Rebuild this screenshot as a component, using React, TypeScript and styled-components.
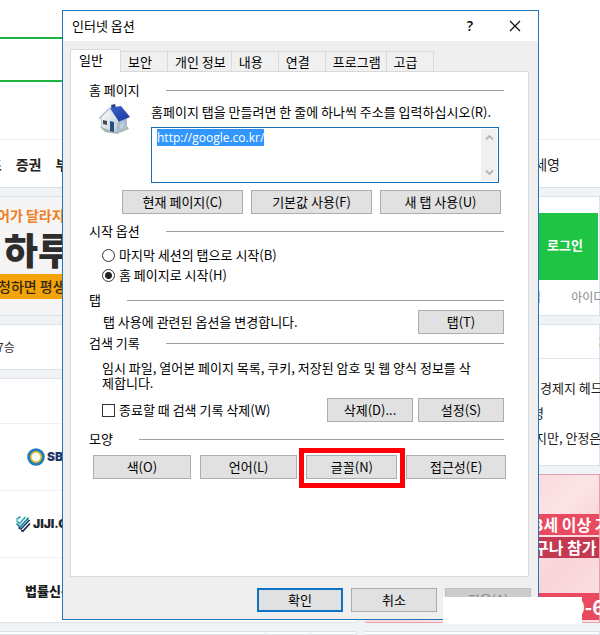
import React, { useEffect, useRef, useState } from "react";
import styled, { createGlobalStyle, css } from "styled-components";

const GlobalStyle = createGlobalStyle`
  * { box-sizing: border-box; }
  body {
    margin: 0;
    background: #fff;
    font-family: "Noto Sans CJK KR", "Noto Sans", sans-serif;
    font-size: 13px;
    line-height: 16px;
    color: #000;
  }
  button, input, textarea { font: inherit; color: inherit; margin: 0; }
  a { color: inherit; text-decoration: none; }
`;

/* ---------- portal page behind the dialog ---------- */

const Page = styled.div`
  position: relative;
  display: flex;
  flex-direction: column;
  min-height: 100vh;
  overflow: hidden;
  background: #f0f3f6;
  white-space: nowrap;
`;

const SearchHeader = styled.header`
  padding: 37px 0 57px;
  background: #fff;
  border-bottom: 1px solid #f0f0f0;
`;

const SearchBox = styled.div`
  width: 60%;
  height: 45px;
  border: 2px solid #20b345;
  border-left: 0;
`;

const PortalNav = styled.nav`
  display: flex;
  align-items: center;
  gap: 14px;
  height: 48px;
  padding-right: 40px;
  overflow: hidden;
  background: #fff;
  border-bottom: 1px solid #d9dee4;
  font-size: 14px;
`;

const NavLink = styled.a<{ $first?: boolean }>`
  font-weight: 700;
  color: #222;
  margin-left: ${(p) => (p.$first ? "-37px" : "0")};
`;

const Trend = styled.a`
  margin-left: auto;
  color: #222;
`;

const Columns = styled.div`
  display: flex;
  flex: 1;
  gap: 8px;
  padding-top: 8px;
`;

const Column = styled.div<{ $main?: boolean }>`
  display: flex;
  flex-direction: column;
  gap: 8px;
  overflow: hidden;
  flex: ${(p) => (p.$main ? "357 1 0" : "235 1 0")};
`;

const Card = styled.section<{ $grow?: boolean }>`
  background: #fff;
  border: 1px solid #dde2e8;
  border-left-width: 0;
  flex: ${(p) => (p.$grow ? "1" : "none")};
`;

const Banner = styled(Card)`
  height: 120px;
  background: #f5f5f5;
  overflow: hidden;
`;

const BannerLead = styled.p`
  margin: 8px 0 0 -3px;
  line-height: 20px;
  font-size: 14px;
  font-weight: 700;
  color: #ef7d22;
`;

const BannerTitle = styled.p`
  margin: 0 0 0 4px;
  line-height: 49px;
  font-size: 37px;
  font-weight: 900;
  color: #2d2d2d;
`;

const BannerStrip = styled.p`
  margin: 0;
  text-indent: -2px;
  line-height: 25px;
  font-size: 14px;
  font-weight: 500;
  color: #38290c;
  background: #f3a40a;
`;

const ScoreCard = styled(Card)`
  height: 46px;
  line-height: 44px;
  font-size: 12px;
  color: #333;
  text-indent: -3px;
`;

const PressList = styled(Card)`
  height: 245px;
  padding-top: 44px;
`;

const PressRow = styled.a<{ $indent: number }>`
  display: flex;
  align-items: center;
  gap: 2px;
  height: 67px;
  padding-left: ${(p) => p.$indent}px;
  border-top: 1px solid #eef0f2;
`;

const PressName = styled.span<{ $color: string; $latin?: boolean }>`
  color: ${(p) => p.$color};
  font-size: ${(p) => (p.$latin ? "12px" : "13px")};
  font-weight: 900;
  font-family: ${(p) => (p.$latin ? 'Inter, "Noto Sans", sans-serif' : "inherit")};
`;

const FooterTabs = styled(Card)`
  display: grid;
  grid-template-columns: 266fr 45fr 45fr;
`;

const FooterCell = styled.div`
  border-right: 1px solid #e3e7ec;
  &:last-child { border-right: 0; }
`;

const LoginCard = styled(Card)`
  height: 120px;
  padding: 16px 1px 0 0;
`;

const LoginButton = styled.button`
  display: block;
  width: 100%;
  height: 67px;
  padding: 0 15px 3px 0;
  text-align: right;
  border: 0;
  background: #20c445;
  color: #fff;
  font-size: 13px;
  font-weight: 700;
`;

const LoginLinks = styled.div`
  display: flex;
  gap: 30px;
  padding-left: 132px;
  line-height: 34px;
  font-size: 12px;
  color: #888;
`;

const NewsCard = styled(Card)`
  height: 142px;
`;

const NewsHeader = styled.div`
  height: 34px;
  padding-left: 233px;
  line-height: 34px;
  color: #aaa;
  border-bottom: 1px solid #e4e8ec;
`;

const NewsLine = styled.a<{ $indent: number }>`
  display: block;
  padding-left: ${(p) => p.$indent}px;
  line-height: 25px;
  color: #222;
  &:first-of-type { margin-top: 16px; }
`;

const AdCard = styled(Card)`
  height: 149px;
  padding-top: 39px;
  border-color: #e5a2ac;
  background: linear-gradient(135deg, #fce8ea 0 25%, #fadade 45%, #fbe4e6 60%, #f9d3d8 75%, #fbe4e6);
  color: #fff;
  font-size: 16px;
  font-weight: 700;
`;

const AdStrip = styled.p<{ $dark?: boolean }>`
  margin: 0 0 2px;
  padding-left: 169px;
  line-height: 21px;
  background: ${(p) => (p.$dark ? "#c43850" : "#e94a60")};
`;

const AdPhone = styled.p`
  margin: 35px 0 0;
  padding-left: 208px;
  line-height: 27px;
  font-size: 20px;
  background: #e94a60;
`;

/* ---------- options dialog ---------- */

const Dialog = styled.div`
  position: absolute;
  top: 10px;
  left: 62px;
  right: 61px;
  display: flex;
  flex-direction: column;
  border: 1px solid #2377b8;
  background: #efefef;
`;

const TitleBar = styled.header`
  display: flex;
  align-items: center;
  height: 30px;
  padding: 0 12px 0 9px;
  background: #fff;
`;

const Title = styled.h1`
  flex: 1;
  margin: 0;
  font-size: 13px;
  font-weight: 400;
`;

const TitleButton = styled.button`
  display: grid;
  place-items: center;
  width: 22px;
  height: 22px;
  margin-left: 23px;
  padding: 0;
  border: 0;
  background: transparent;
  font-family: "Open Sans", sans-serif;
  font-size: 14px;
  font-weight: 600;
`;

const DialogBody = styled.div`
  padding: 8px 9px 7px 7px;
`;

const TabList = styled.div`
  display: flex;
  align-items: flex-end;
  height: 22px;
`;

const Tab = styled.button<{ $active: boolean }>`
  min-width: 47px;
  height: 20px;
  padding: 0 5px 0 7px;
  text-align: left;
  border: 1px solid #d9d9d9;
  border-width: 1px 1px 0 0;
  background: #f0f0f0;
  ${(p) =>
    p.$active &&
    css`
      z-index: 1;
      min-width: 51px;
      height: 23px;
      margin-bottom: -1px;
      padding: 0 5px 3px 8px;
      border-left-width: 1px;
      background: #fff;
    `}
`;

const TabPanel = styled.div`
  padding: 10px 22px 88px 18px;
  border: 1px solid #d9d9d9;
  background: #fff;
`;

const Group = styled.section`
  margin-bottom: 9px;
`;

const GroupTitle = styled.h2`
  display: flex;
  align-items: center;
  gap: 26px;
  margin: 0;
  padding-right: 2px;
  font-size: 13px;
  font-weight: 400;
  &::after {
    content: "";
    flex: 1;
    height: 1px;
    background: #a0a0a0;
  }
`;

const HomeRow = styled.div`
  display: flex;
  gap: 20px;
  padding: 6px 7px 7px 9px;
`;

const HomeField = styled.div`
  flex: 1;
  min-width: 0;
`;

const AddressLabel = styled.label`
  display: block;
  margin-bottom: 7px;
`;

const AddressBox = styled.div`
  display: flex;
  height: 56px;
  padding: 1px;
  border: 1px solid #1670b8;
  background: #fff;
`;

const AddressInput = styled.textarea`
  flex: 1;
  min-width: 0;
  padding: 1px 4px;
  border: 0;
  outline: 0;
  resize: none;
  overflow: hidden;
  background: transparent;
  font-family: "Open Sans", sans-serif;
  font-size: 12px;
  &::selection { background: #3297fd; color: #fff; }
`;

const ScrollTrack = styled.div`
  display: flex;
  flex-direction: column;
  justify-content: space-between;
  width: 16px;
  background: #f0f0f0;
`;

const ScrollButton = styled.button`
  display: grid;
  place-items: center;
  width: 16px;
  height: 17px;
  padding: 0;
  border: 0;
  background: transparent;
`;

const PushButton = styled.button<{ $primary?: boolean; $fixed?: boolean }>`
  width: ${(p) => (p.$fixed ? "86px" : "100%")};
  height: 24px;
  padding: 0;
  border: ${(p) => (p.$primary ? "2px solid #0f74c4" : "1px solid #adadad")};
  background: #e1e1e1;
  &:disabled {
    background: #ccc;
    border-color: #bfbfbf;
    color: #838383;
  }
`;

const HomeButtons = styled.div`
  display: grid;
  grid-template-columns: repeat(3, 1fr);
  gap: 8px;
  padding: 0 5px 0 33px;
`;

const Choices = styled.div`
  padding: 6px 0 0 13px;
  margin-bottom: -2px;
`;

const Choice = styled.label`
  display: flex;
  align-items: center;
  gap: 4px;
  height: 20px;
`;

const Radio = styled.input`
  appearance: none;
  width: 13px;
  height: 13px;
  border: 1px solid #333;
  border-radius: 50%;
  background: #fff;
  &:checked { background: radial-gradient(circle, #222 0 3px, #fff 4px); }
`;

const Check = styled.input`
  appearance: none;
  width: 13px;
  height: 13px;
  border: 1px solid #333;
  background: #fff;
  &:checked { background: #333; }
`;

const ActionRow = styled.div<{ $tight?: boolean }>`
  display: flex;
  align-items: center;
  gap: 5px;
  padding: ${(p) => (p.$tight ? "2px 2px 0 14px" : "8px 2px 0 13px")};
  margin-bottom: ${(p) => (p.$tight ? "-8px" : "0")};
`;

const Grow = styled.div`
  flex: 1;
`;

const Note = styled.p`
  margin: 0;
  padding: 9px 26px 0 13px;
  line-height: 15px;
  white-space: normal;
  word-break: break-all;
`;

const LookButtons = styled.div`
  display: grid;
  grid-template-columns: 98fr 98fr 91fr 100fr;
  gap: 9px;
  padding: 8px 0 0 4px;
`;

const Highlight = styled.div`
  position: relative;
  &::after {
    content: "";
    position: absolute;
    inset: -7px -8px -9px -7px;
    border: 5px solid #fb0007;
    pointer-events: none;
  }
`;

const DialogButtons = styled.footer`
  display: flex;
  justify-content: flex-end;
  gap: 8px;
  padding-top: 11px;
  margin-right: -2px;
`;

const BlankPatch = styled.div`
  position: absolute;
  left: 443px;
  right: 18px;
  top: 597px;
  height: 27px;
  background: #fff;
`;

/* ---------- drawings ---------- */

const HouseIcon = () => (
  <svg width="33" height="32" viewBox="0 0 33 32" aria-hidden="true">
    <defs>
      <linearGradient id="roof" x1="0" y1="0" x2="1" y2="1">
        <stop offset="0" stopColor="#3c62c8" />
        <stop offset="1" stopColor="#1736a0" />
      </linearGradient>
      <linearGradient id="wall" x1="0" y1="0" x2="1" y2="1">
        <stop offset="0" stopColor="#ffffff" />
        <stop offset="1" stopColor="#bccbd5" />
      </linearGradient>
    </defs>
    <path d="M2 23 L7 28 L19 30 L31 25 L29 22 Z" fill="#a7b8ab" />
    <path d="M13 1 L17 0 L18 4 L14 6 Z" fill="#2b3f78" />
    <path d="M3 13 L11 5 L20 17 L19 29 L4 24 Z" fill="url(#wall)" stroke="#9aa8b2" strokeWidth="0.7" />
    <path d="M20 17 L29 13 L29 24 L19 29 Z" fill="#aabfcb" />
    <path d="M11 4 L23 2 L32 13 L20 18 Z" fill="url(#roof)" />
    <path d="M1 14 L11 4 L20 18" fill="none" stroke="#dbe4ed" strokeWidth="1.6" />
    <path d="M1 15 L11 5" fill="none" stroke="#7c8ea5" strokeWidth="0.6" />
    <path d="M5 16 L9 17 L9 21 L5 20 Z" fill="#3c4a55" />
    <path d="M12 17 L16 18 L16 28 L12 27 Z" fill="#235180" />
    <path d="M22 20 L26 18 L26 23 L22 25 Z" fill="#bfd0d9" />
  </svg>
);

const CloseIcon = () => (
  <svg width="12" height="12" viewBox="0 0 12 12" aria-hidden="true">
    <path d="M1 1 L11 11 M11 1 L1 11" stroke="#111" strokeWidth="1.2" fill="none" />
  </svg>
);

const Chevron = ({ up }: { up?: boolean }) => (
  <svg width="9" height="7" viewBox="0 0 9 7" aria-hidden="true">
    <path d={up ? "M1 5.5 L4.5 2 L8 5.5" : "M1 1.5 L4.5 5 L8 1.5"} stroke="#b3b3b3" strokeWidth="1.8" fill="none" />
  </svg>
);

const RingLogo = () => (
  <svg width="18" height="18" viewBox="0 0 18 18" aria-hidden="true">
    <circle cx="9" cy="9" r="7" fill="#fff" stroke="#1f7fb8" strokeWidth="3.6" />
    <circle cx="9" cy="9" r="5.2" fill="none" stroke="#edb52b" strokeWidth="1.6" />
  </svg>
);

const JijiLogo = () => (
  <svg width="15" height="16" viewBox="0 0 15 16" aria-hidden="true" fill="none" strokeWidth="1.7">
    <path d="M0.5 4.5 L3.5 7.5 L9.5 1" stroke="#35aab8" />
    <path d="M0.5 7.5 L4 11 L12.5 1.8" stroke="#2381a0" />
    <path d="M2.5 11.5 L5 13 L13.5 4" stroke="#1d4370" />
    <path d="M5 14.5 L7 15 L14 7.5" stroke="#18284c" />
    <path d="M0.5 3.5 L4.5 0.5" stroke="#35aab8" />
  </svg>
);

const TABS = ["일반", "보안", "개인 정보", "내용", "연결", "프로그램", "고급"];

function OptionsDialog() {
  const [tab, setTab] = useState(0);
  const [start, setStart] = useState("home");
  const address = useRef<HTMLTextAreaElement>(null);

  useEffect(() => {
    address.current?.focus();
    address.current?.select();
  }, []);

  return (
    <Dialog role="dialog" aria-labelledby="dialog-title">
      <TitleBar>
        <Title id="dialog-title">인터넷 옵션</Title>
        <TitleButton aria-label="도움말">?</TitleButton>
        <TitleButton aria-label="닫기"><CloseIcon /></TitleButton>
      </TitleBar>
      <DialogBody>
        <TabList role="tablist">
          {TABS.map((name, i) => (
            <Tab key={name} role="tab" aria-selected={tab === i} $active={tab === i} onClick={() => setTab(i)}>
              {name}
            </Tab>
          ))}
        </TabList>
        <TabPanel role="tabpanel">
          <Group>
            <GroupTitle>홈 페이지</GroupTitle>
            <HomeRow>
              <HouseIcon />
              <HomeField>
                <AddressLabel htmlFor="address">
                  홈페이지 탭을 만들려면 한 줄에 하나씩 주소를 입력하십시오(R).
                </AddressLabel>
                <AddressBox>
                  <AddressInput id="address" ref={address} spellCheck={false} defaultValue="http://google.co.kr/" />
                  <ScrollTrack>
                    <ScrollButton aria-label="위로"><Chevron up /></ScrollButton>
                    <ScrollButton aria-label="아래로"><Chevron /></ScrollButton>
                  </ScrollTrack>
                </AddressBox>
              </HomeField>
            </HomeRow>
            <HomeButtons>
              <PushButton>현재 페이지(C)</PushButton>
              <PushButton>기본값 사용(F)</PushButton>
              <PushButton>새 탭 사용(U)</PushButton>
            </HomeButtons>
          </Group>
          <Group>
            <GroupTitle>시작 옵션</GroupTitle>
            <Choices>
              <Choice>
                <Radio type="radio" name="start" checked={start === "last"} onChange={() => setStart("last")} />
                마지막 세션의 탭으로 시작(B)
              </Choice>
              <Choice>
                <Radio type="radio" name="start" checked={start === "home"} onChange={() => setStart("home")} />
                홈 페이지로 시작(H)
              </Choice>
            </Choices>
          </Group>
          <Group>
            <GroupTitle>탭</GroupTitle>
            <ActionRow $tight>
              <Grow>탭 사용에 관련된 옵션을 변경합니다.</Grow>
              <PushButton $fixed>탭(T)</PushButton>
            </ActionRow>
          </Group>
          <Group>
            <GroupTitle>검색 기록</GroupTitle>
            <Note>임시 파일, 열어본 페이지 목록, 쿠키, 저장된 암호 및 웹 양식 정보를 삭제합니다.</Note>
            <ActionRow>
              <Grow>
                <Choice>
                  <Check type="checkbox" />
                  종료할 때 검색 기록 삭제(W)
                </Choice>
              </Grow>
              <PushButton $fixed>삭제(D)...</PushButton>
              <PushButton $fixed>설정(S)</PushButton>
            </ActionRow>
          </Group>
          <Group>
            <GroupTitle>모양</GroupTitle>
            <LookButtons>
              <PushButton>색(O)</PushButton>
              <PushButton>언어(L)</PushButton>
              <Highlight><PushButton>글꼴(N)</PushButton></Highlight>
              <PushButton>접근성(E)</PushButton>
            </LookButtons>
          </Group>
        </TabPanel>
        <DialogButtons>
          <PushButton $fixed $primary>확인</PushButton>
          <PushButton $fixed>취소</PushButton>
          <PushButton $fixed disabled>적용(A)</PushButton>
        </DialogButtons>
      </DialogBody>
    </Dialog>
  );
}

export default function App() {
  return (
    <>
      <GlobalStyle />
      <Page>
        <SearchHeader><SearchBox /></SearchHeader>
        <PortalNav>
          <NavLink href="#sports" $first>스포츠</NavLink>
          <NavLink href="#stock">증권</NavLink>
          <NavLink href="#land">부</NavLink>
          <Trend href="#trend">세영</Trend>
        </PortalNav>
        <Columns>
          <Column $main>
            <Banner>
              <BannerLead>어가 달라지</BannerLead>
              <BannerTitle>하루</BannerTitle>
              <BannerStrip>청하면 평생</BannerStrip>
            </Banner>
            <ScoreCard>7승</ScoreCard>
            <PressList>
              <PressRow href="#sbs" $indent={27}>
                <RingLogo />
                <PressName $color="#1c3568" $latin>SBS</PressName>
              </PressRow>
              <PressRow href="#jiji" $indent={16}>
                <JijiLogo />
                <PressName $color="#20242c" $latin>JIJI.COM</PressName>
              </PressRow>
              <PressRow href="#law" $indent={25}>
                <PressName $color="#1c1c1c">법률신문</PressName>
              </PressRow>
            </PressList>
            <FooterTabs $grow>
              <FooterCell /><FooterCell /><FooterCell />
            </FooterTabs>
          </Column>
          <Column>
            <LoginCard>
              <LoginButton>로그인</LoginButton>
              <LoginLinks>
                <a href="#join">회원가입</a>
                <a href="#find">아이디</a>
              </LoginLinks>
            </LoginCard>
            <NewsCard>
              <NewsHeader>가</NewsHeader>
              <NewsLine href="#n1" $indent={175}>경제지 헤드</NewsLine>
              <NewsLine href="#n2" $indent={167}>령</NewsLine>
              <NewsLine href="#n3" $indent={170}>지만, 안정은</NewsLine>
            </NewsCard>
            <AdCard>
              <AdStrip>3세 이상 가</AdStrip>
              <AdStrip $dark>구나 참가</AdStrip>
              <AdPhone>0-6</AdPhone>
            </AdCard>
            <Card $grow />
          </Column>
        </Columns>
        <OptionsDialog />
        <BlankPatch />
      </Page>
    </>
  );
}
